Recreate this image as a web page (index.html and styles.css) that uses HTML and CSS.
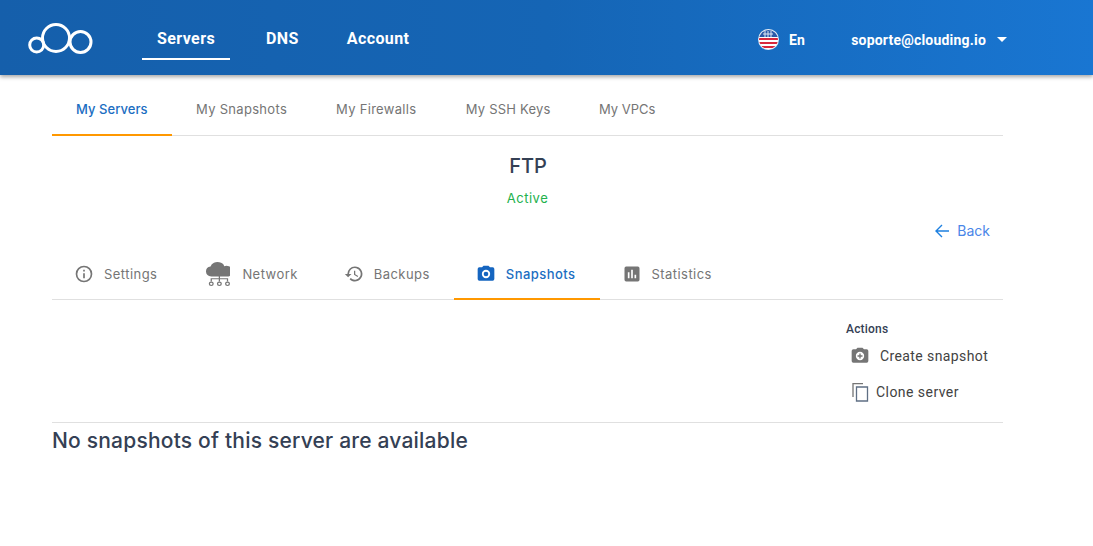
FILE: index.html
```html
<!DOCTYPE html>
<html lang="en">
<head>
<meta charset="utf-8">
<title>FTP - Snapshots</title>
<link rel="stylesheet" href="styles.css">
</head>
<body>
<header class="topbar">
  <svg class="logo" width="66" height="34" viewBox="0 0 66 34" fill="none" stroke="#fff" stroke-width="3"><circle cx="9.700" cy="24" r="7"/><circle cx="29" cy="17" r="13.500"/><circle cx="53.500" cy="21" r="10.500"/></svg>
  <nav class="mainnav">
    <a class="mainlink current">Servers</a>
    <a class="mainlink">DNS</a>
    <a class="mainlink">Account</a>
  </nav>
  <div class="userarea">
    <svg class="flag" width="21" height="21" viewBox="0 0 21 21"><defs><clipPath id="fc"><circle cx="10.500" cy="10.500" r="9.500"/></clipPath></defs><circle cx="10.500" cy="10.500" r="10.500" fill="#e8eef6"/><g clip-path="url(#fc)"><rect width="21" height="21" fill="#fff"/><rect y="9" width="21" height="2" fill="#d8283c"/><rect y="13" width="21" height="2" fill="#d8283c"/><rect y="17" width="21" height="2" fill="#d8283c"/><rect width="21" height="8" fill="#2b5aa8"/><path d="M7 2v6M10 2v6M13 2v6M5 5h10" stroke="#dfe8f5" stroke-width="1"/></g></svg>
    <span class="lang">En</span>
    <span class="email">soporte@clouding.io</span>
    <span class="caret"></span>
  </div>
</header>
<main class="page">
  <nav class="tabs toptabs">
    <a class="tab active">My Servers</a>
    <a class="tab">My Snapshots</a>
    <a class="tab">My Firewalls</a>
    <a class="tab">My SSH Keys</a>
    <a class="tab">My VPCs</a>
  </nav>
  <h1 class="title">FTP</h1>
  <div class="status">Active</div>
  <div class="backrow">
    <a class="back">
      <svg width="16" height="16" viewBox="0 0 16 16" fill="none" stroke="#1e80e0" stroke-width="1.400"><path d="M15 8H2M8 2L2 8l6 6"/></svg>
      <span>Back</span>
    </a>
  </div>
  <nav class="tabs servertabs">
    <a class="tab icontab">
      <svg width="20" height="20" viewBox="0 0 24 24" fill="#757575"><path d="M11 7h2v2h-2zm0 4h2v6h-2zm1-9a10 10 0 1 0 0 20 10 10 0 0 0 0-20zm0 18a8 8 0 1 1 0-16 8 8 0 0 1 0 16z"/></svg>
      <span>Settings</span>
    </a>
    <a class="tab icontab">
      <svg class="netico" width="25" height="24" viewBox="0.500 1.500 20 21.500" preserveAspectRatio="none" fill="#757575"><path d="M5.500 14.500a4.500 4.500 0 0 1-.6-8.900A5.800 5.800 0 0 1 12 1.800a5 5 0 0 1 3.900 3.400 4.700 4.700 0 0 1 3.400 9.300z"/><g fill="none" stroke="#757575" stroke-width="1"><path d="M12 14v5M12 16.500H5.500v2.500M12 16.500h6.500v2.500"/><circle cx="5.500" cy="21" r="1.500"/><circle cx="12" cy="21" r="1.500"/><circle cx="18.500" cy="21" r="1.500"/></g></svg>
      <span>Network</span>
    </a>
    <a class="tab icontab">
      <svg width="20" height="20" viewBox="0 0 24 24" fill="#757575"><path d="M13 3a9 9 0 0 0-9 9H1l3.900 3.900L9 12H6a7 7 0 1 1 2.100 4.900l-1.400 1.400A9 9 0 1 0 13 3zm-1 5v5l4.300 2.500.7-1.200-3.500-2.100V8z"/></svg>
      <span>Backups</span>
    </a>
    <a class="tab icontab active">
      <svg width="20" height="20" viewBox="0 0 24 24" fill="#1565c0"><path d="M9 2L7.200 4H4a2 2 0 0 0-2 2v12a2 2 0 0 0 2 2h16a2 2 0 0 0 2-2V6a2 2 0 0 0-2-2h-3.200L15 2zm3 15a5 5 0 1 1 0-10 5 5 0 0 1 0 10zm0-2.200a2.800 2.800 0 1 0 0-5.600 2.800 2.800 0 0 0 0 5.600z" fill-rule="evenodd"/></svg>
      <span>Snapshots</span>
    </a>
    <a class="tab icontab">
      <svg width="20" height="20" viewBox="0 0 24 24" fill="#757575"><path d="M19 3H5a2 2 0 0 0-2 2v14a2 2 0 0 0 2 2h14a2 2 0 0 0 2-2V5a2 2 0 0 0-2-2zM9 17H7v-7h2zm4 0h-2V7h2zm4 0h-2v-4h2z"/></svg>
      <span>Statistics</span>
    </a>
  </nav>
  <section class="actionsrow">
    <div class="actions">
      <div class="actionstitle">Actions</div>
      <a class="action snap">
        <svg width="20" height="20" viewBox="0 0 24 24" fill="#757575"><path fill-rule="evenodd" d="M9 2L7.200 4H4a2 2 0 0 0-2 2v12a2 2 0 0 0 2 2h16a2 2 0 0 0 2-2V6a2 2 0 0 0-2-2h-3.200L15 2zm3 15a5 5 0 1 1 0-10 5 5 0 0 1 0 10zm-.8-5.800V9h1.600v2.200H15v1.600h-2.200V15h-1.600v-2.200H9v-1.600z"/></svg>
        <span>Create snapshot</span>
      </a>
      <a class="action clone">
        <svg width="20" height="20" viewBox="0 0 20 20" fill="none" stroke-width="1.300"><path d="M2 15V1.700h10" stroke="#757575"/><path d="M5.500 5h11v14h-11z" stroke="#5f6f84"/></svg>
        <span>Clone server</span>
      </a>
    </div>
  </section>
  <h2 class="empty">No snapshots of this server are available</h2>
</main>
</body>
</html>
```

FILE: styles.css
```css
* { box-sizing: border-box; }
html, body { margin: 0; padding: 0; }
body { background: #fff; font-family: Roboto, "Liberation Sans", sans-serif; color: #344054; height: 546px; overflow: hidden; }
a { cursor: pointer; }

.topbar { height: 75px; display: flex; align-items: center; padding-left: 27px; background: linear-gradient(90deg, #155fab 0%, #1565b5 50%, #1976d2 100%); box-shadow: 0 2px 4px rgba(0,0,0,.35); position: relative; color: #fff; }
.logo { flex: none; }
.mainnav { display: flex; margin-left: 49px; gap: 18px; align-items: stretch; }
.mainlink { font-size: 16px; font-weight: 700; letter-spacing: .4px; padding: 3px 15px 0; height: 44px; line-height: 40px; margin-top: 1px; border-bottom: 2px solid transparent; }
.mainlink.current { border-bottom-color: #fff; margin-right: 3px; }
.userarea { display: flex; align-items: center; margin-left: auto; padding-right: 86px; font-weight: 700; font-size: 14px; letter-spacing: .2px; padding-top: 5px; }
.flag { margin-top: -1px; }
.lang { margin-left: 10px; }
.email { margin-left: 46px; }
.caret { margin-left: 11px; width: 0; height: 0; border-left: 5px solid transparent; border-right: 5px solid transparent; border-top: 5px solid #fff; margin-top: -2px; }

.page { margin: 0 90px 0 52px; }
.tabs { display: flex; border-bottom: 1px solid #e0e0e0; font-family: Inter, Roboto, sans-serif; font-size: 13px; font-weight: 400; letter-spacing: .3px; color: #757575; }
.toptabs { height: 61px; }
.tab { display: flex; align-items: center; padding: 8px 24.500px 0; margin-bottom: -1px; border-bottom: 2px solid transparent; }
.tab.active { color: #1b6ec2; font-weight: 500; letter-spacing: .05px; padding: 8px 24px 0; border-bottom-color: #ff9800; }
.toptabs .tab:nth-child(4) { padding-left: 25px; letter-spacing: .2px; }
.toptabs .tab:last-child { padding-left: 24px; letter-spacing: 0; }
.title { margin: 18px 0 0; padding-left: 1px; font-family: Inter, Roboto, sans-serif; font-size: 20px; line-height: 24px; font-weight: 500; text-align: center; }
.status { margin-top: 11px; font-family: Inter, Roboto, sans-serif; font-size: 13px; line-height: 18px; text-align: center; color: #22b14c; letter-spacing: .5px; }
.backrow { display: flex; justify-content: flex-end; margin-top: 14px; padding-right: 13px; }
.back { display: flex; align-items: center; gap: 7px; font-family: Inter, Roboto, sans-serif; font-size: 14px; line-height: 20px; color: #4a86e8; }
.servertabs { height: 51px; margin-top: 8px; letter-spacing: .45px; }
.servertabs .tab { padding: 0 24px 0 22px; }
.servertabs .tab:first-child { padding-right: 26px; }
.servertabs .tab.active { letter-spacing: .45px; }
.icontab { gap: 10px; }
.netico { margin-right: 2px; }
.actionsrow { display: flex; justify-content: flex-end; height: 123px; border-bottom: 1px solid #e0e0e0; }
.actions { width: 157px; padding-top: 21px; }
.actionstitle { font-size: 12px; font-weight: 500; line-height: 16px; letter-spacing: .2px; }
.action { display: flex; align-items: center; font-size: 14px; line-height: 20px; letter-spacing: .4px; color: #424242; padding-left: 4px; }
.snap { margin-top: 9px; gap: 10px; }
.clone { margin-top: 16px; gap: 5px; padding-left: 5px; letter-spacing: .45px; }
.empty { margin: 6px 0 0; font-family: Inter, Roboto, sans-serif; font-size: 21px; line-height: 24px; font-weight: 500; letter-spacing: .2px; }
```
